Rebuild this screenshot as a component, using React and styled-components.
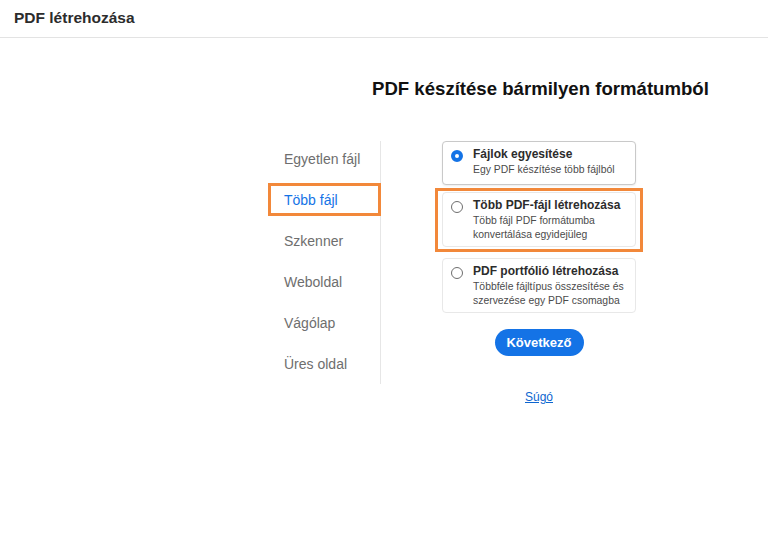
import React, { useState } from "react";
import styled, { createGlobalStyle } from "styled-components";

const GlobalStyle = createGlobalStyle`
  html, body {
    margin: 0;
    padding: 0;
    background: #ffffff;
    font-family: "Liberation Sans", Arial, sans-serif;
  }
`;

const Page = styled.div`
  width: 768px;
  height: 543px;
  overflow: hidden;
  background: #ffffff;
`;

const Header = styled.header`
  height: 37px;
  border-bottom: 1px solid #e3e3e3;
  display: flex;
  align-items: center;
  padding-left: 14px;
`;

const HeaderTitle = styled.h1`
  margin: 0;
  font-size: 15.5px;
  font-weight: bold;
  color: #2c2c2c;
  position: relative;
  top: -1px;
`;

const Heading = styled.h2`
  margin: 40px 0 0 372px;
  font-size: 18.6px;
  line-height: 22px;
  font-weight: bold;
  color: #111111;
`;

const Content = styled.div`
  display: flex;
  align-items: flex-start;
  margin: 41px 0 0 268px;
`;

const Nav = styled.nav`
  width: 112px;
  display: flex;
  flex-direction: column;
  gap: 8px;
  padding: 1px 0 4px;
  border-right: 1px solid #e6e6e6;
`;

const NavItem = styled.button`
  height: 33px;
  box-sizing: border-box;
  border: 3px solid ${(p) => (p.$active ? "#f2883a" : "transparent")};
  margin-right: -1px;
  background: none;
  text-align: left;
  padding: 0 0 0 13px;
  font-family: inherit;
  font-size: 14px;
  color: ${(p) => (p.$active ? "#1473e6" : "#6e6e6e")};
  cursor: pointer;
`;

const Options = styled.div`
  width: 194px;
  margin-left: 61px;
  display: flex;
  flex-direction: column;
  align-items: center;
`;

const Highlight = styled.div`
  align-self: stretch;
  margin: 0 -7px 6px;
  padding: 1px 4px 2px;
  border: 3px solid #f2883a;
`;

const Card = styled.label`
  align-self: stretch;
  display: flex;
  align-items: flex-start;
  gap: 10px;
  box-sizing: border-box;
  min-height: ${(p) => (p.$tall ? "55px" : "44px")};
  padding: 5px 8px 4px 8px;
  border-radius: 4px;
  border: 1px solid ${(p) => (p.$checked ? "#c9c9c9" : "#e8e8e8")};
  box-shadow: ${(p) => (p.$checked ? "0 1px 2px rgba(0,0,0,0.08)" : "none")};
  margin-bottom: ${(p) => p.$gap || 0}px;
  background: #ffffff;
  cursor: pointer;
`;

const Radio = styled.span`
  flex: none;
  width: 12px;
  height: 12px;
  box-sizing: border-box;
  margin-top: 3px;
  border-radius: 50%;
  border: ${(p) => (p.$checked ? "4px solid #1473e6" : "1.5px solid #6e6e6e")};
  background: #ffffff;
`;

const CardText = styled.div`
  display: flex;
  flex-direction: column;
`;

const CardTitle = styled.span`
  font-size: 12px;
  line-height: 15px;
  font-weight: bold;
  color: #2c2c2c;
`;

const CardDesc = styled.span`
  margin-top: 1px;
  font-size: 10.4px;
  line-height: 14px;
  color: #4b4b4b;
`;

const NextButton = styled.button`
  margin-top: 16px;
  width: 89px;
  height: 27px;
  border: none;
  border-radius: 14px;
  background: #1473e6;
  color: #ffffff;
  font-family: inherit;
  font-size: 13px;
  font-weight: bold;
  cursor: pointer;
`;

const HelpLink = styled.a`
  margin-top: 34px;
  font-size: 12px;
  color: #0d66d0;
  text-decoration: underline;
`;

const navItems = [
  "Egyetlen fájl",
  "Több fájl",
  "Szkenner",
  "Weboldal",
  "Vágólap",
  "Üres oldal",
];

const options = [
  {
    id: "merge",
    title: "Fájlok egyesítése",
    desc: ["Egy PDF készítése több fájlból"],
  },
  {
    id: "multi",
    title: "Több PDF-fájl létrehozása",
    desc: ["Több fájl PDF formátumba", "konvertálása egyidejüleg"],
  },
  {
    id: "portfolio",
    title: "PDF portfólió létrehozása",
    desc: ["Többféle fájltípus összesítése és", "szervezése egy PDF csomagba"],
  },
];

const App = () => {
  const [active, setActive] = useState("Több fájl");
  const [choice, setChoice] = useState("merge");

  const renderCard = (o, gap) => (
    <Card
      key={o.id}
      $checked={choice === o.id}
      $tall={o.desc.length > 1}
      $gap={gap}
      onClick={() => setChoice(o.id)}
    >
      <Radio $checked={choice === o.id} />
      <CardText>
        <CardTitle>{o.title}</CardTitle>
        <CardDesc>
          {o.desc.map((line, i) => (
            <React.Fragment key={i}>
              {i > 0 && <br />}
              {line}
            </React.Fragment>
          ))}
        </CardDesc>
      </CardText>
    </Card>
  );

  return (
    <Page>
      <GlobalStyle />
      <Header>
        <HeaderTitle>PDF létrehozása</HeaderTitle>
      </Header>
      <Heading>PDF készítése bármilyen formátumból</Heading>
      <Content>
        <Nav>
          {navItems.map((item) => (
            <NavItem
              key={item}
              $active={active === item}
              onClick={() => setActive(item)}
            >
              {item}
            </NavItem>
          ))}
        </Nav>
        <Options>
          {renderCard(options[0], 3)}
          <Highlight>{renderCard(options[1])}</Highlight>
          {renderCard(options[2])}
          <NextButton>Következő</NextButton>
          <HelpLink href="#">Súgó</HelpLink>
        </Options>
      </Content>
    </Page>
  );
};

export default App;
